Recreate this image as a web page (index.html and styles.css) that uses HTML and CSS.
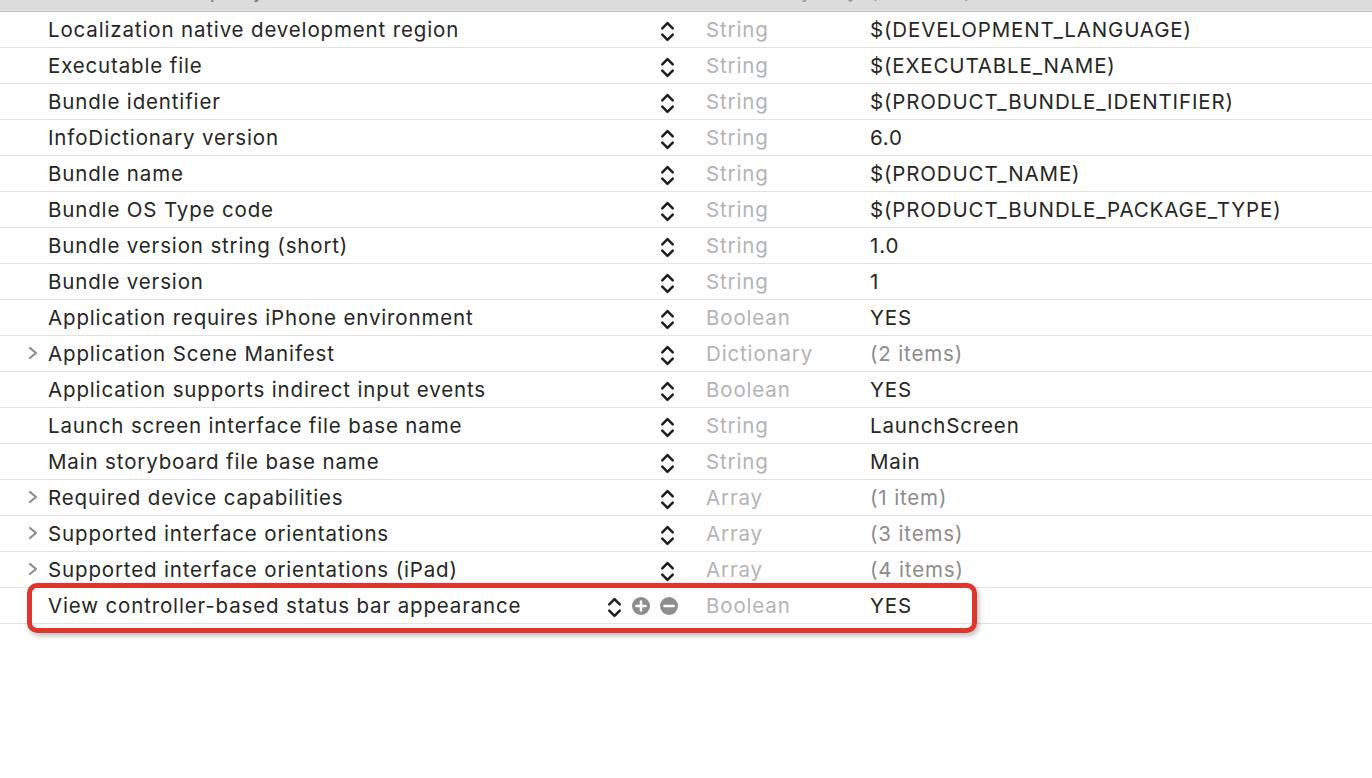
FILE: index.html
```html
<!DOCTYPE html>
<html>
<head>
  <meta name="viewport" content="width=device-width, initial-scale=1.0">
  <link rel="stylesheet" href="styles.css">
</head>
<body>
  <div class="plist">
    <div class="row root">
      <div class="disclosure"></div>
      <div class="key">Information Property List</div>
      <div class="controls">
        <span class="circle-btn"></span>
      </div>
      <div class="type">Dictionary <svg class="stepper small" viewBox="0 0 14 20"><polyline points="2,7 7,2 12,7"/><polyline points="2,13 7,18 12,13"/></svg></div>
      <div class="value muted">(16 items)</div>
    </div>

    <div class="row">
      <div class="disclosure"></div>
      <div class="key">Localization native development region</div>
      <div class="controls"><svg class="stepper" viewBox="0 0 14 20"><polyline points="2,7 7,2 12,7"/><polyline points="2,13 7,18 12,13"/></svg></div>
      <div class="type">String</div>
      <div class="value">$(DEVELOPMENT_LANGUAGE)</div>
    </div>
    <div class="row">
      <div class="disclosure"></div>
      <div class="key">Executable file</div>
      <div class="controls"><svg class="stepper" viewBox="0 0 14 20"><polyline points="2,7 7,2 12,7"/><polyline points="2,13 7,18 12,13"/></svg></div>
      <div class="type">String</div>
      <div class="value">$(EXECUTABLE_NAME)</div>
    </div>
    <div class="row">
      <div class="disclosure"></div>
      <div class="key">Bundle identifier</div>
      <div class="controls"><svg class="stepper" viewBox="0 0 14 20"><polyline points="2,7 7,2 12,7"/><polyline points="2,13 7,18 12,13"/></svg></div>
      <div class="type">String</div>
      <div class="value">$(PRODUCT_BUNDLE_IDENTIFIER)</div>
    </div>
    <div class="row">
      <div class="disclosure"></div>
      <div class="key">InfoDictionary version</div>
      <div class="controls"><svg class="stepper" viewBox="0 0 14 20"><polyline points="2,7 7,2 12,7"/><polyline points="2,13 7,18 12,13"/></svg></div>
      <div class="type">String</div>
      <div class="value">6.0</div>
    </div>
    <div class="row">
      <div class="disclosure"></div>
      <div class="key">Bundle name</div>
      <div class="controls"><svg class="stepper" viewBox="0 0 14 20"><polyline points="2,7 7,2 12,7"/><polyline points="2,13 7,18 12,13"/></svg></div>
      <div class="type">String</div>
      <div class="value">$(PRODUCT_NAME)</div>
    </div>
    <div class="row">
      <div class="disclosure"></div>
      <div class="key">Bundle OS Type code</div>
      <div class="controls"><svg class="stepper" viewBox="0 0 14 20"><polyline points="2,7 7,2 12,7"/><polyline points="2,13 7,18 12,13"/></svg></div>
      <div class="type">String</div>
      <div class="value">$(PRODUCT_BUNDLE_PACKAGE_TYPE)</div>
    </div>
    <div class="row">
      <div class="disclosure"></div>
      <div class="key">Bundle version string (short)</div>
      <div class="controls"><svg class="stepper" viewBox="0 0 14 20"><polyline points="2,7 7,2 12,7"/><polyline points="2,13 7,18 12,13"/></svg></div>
      <div class="type">String</div>
      <div class="value">1.0</div>
    </div>
    <div class="row">
      <div class="disclosure"></div>
      <div class="key">Bundle version</div>
      <div class="controls"><svg class="stepper" viewBox="0 0 14 20"><polyline points="2,7 7,2 12,7"/><polyline points="2,13 7,18 12,13"/></svg></div>
      <div class="type">String</div>
      <div class="value">1</div>
    </div>
    <div class="row">
      <div class="disclosure"></div>
      <div class="key">Application requires iPhone environment</div>
      <div class="controls"><svg class="stepper" viewBox="0 0 14 20"><polyline points="2,7 7,2 12,7"/><polyline points="2,13 7,18 12,13"/></svg></div>
      <div class="type">Boolean</div>
      <div class="value">YES</div>
    </div>
    <div class="row">
      <div class="disclosure"><svg class="chevron" viewBox="0 0 10 12"><polyline points="2,1 8,6 2,11"/></svg></div>
      <div class="key">Application Scene Manifest</div>
      <div class="controls"><svg class="stepper" viewBox="0 0 14 20"><polyline points="2,7 7,2 12,7"/><polyline points="2,13 7,18 12,13"/></svg></div>
      <div class="type">Dictionary</div>
      <div class="value muted">(2 items)</div>
    </div>
    <div class="row">
      <div class="disclosure"></div>
      <div class="key">Application supports indirect input events</div>
      <div class="controls"><svg class="stepper" viewBox="0 0 14 20"><polyline points="2,7 7,2 12,7"/><polyline points="2,13 7,18 12,13"/></svg></div>
      <div class="type">Boolean</div>
      <div class="value">YES</div>
    </div>
    <div class="row">
      <div class="disclosure"></div>
      <div class="key">Launch screen interface file base name</div>
      <div class="controls"><svg class="stepper" viewBox="0 0 14 20"><polyline points="2,7 7,2 12,7"/><polyline points="2,13 7,18 12,13"/></svg></div>
      <div class="type">String</div>
      <div class="value">LaunchScreen</div>
    </div>
    <div class="row">
      <div class="disclosure"></div>
      <div class="key">Main storyboard file base name</div>
      <div class="controls"><svg class="stepper" viewBox="0 0 14 20"><polyline points="2,7 7,2 12,7"/><polyline points="2,13 7,18 12,13"/></svg></div>
      <div class="type">String</div>
      <div class="value">Main</div>
    </div>
    <div class="row">
      <div class="disclosure"><svg class="chevron" viewBox="0 0 10 12"><polyline points="2,1 8,6 2,11"/></svg></div>
      <div class="key">Required device capabilities</div>
      <div class="controls"><svg class="stepper" viewBox="0 0 14 20"><polyline points="2,7 7,2 12,7"/><polyline points="2,13 7,18 12,13"/></svg></div>
      <div class="type">Array</div>
      <div class="value muted">(1 item)</div>
    </div>
    <div class="row">
      <div class="disclosure"><svg class="chevron" viewBox="0 0 10 12"><polyline points="2,1 8,6 2,11"/></svg></div>
      <div class="key">Supported interface orientations</div>
      <div class="controls"><svg class="stepper" viewBox="0 0 14 20"><polyline points="2,7 7,2 12,7"/><polyline points="2,13 7,18 12,13"/></svg></div>
      <div class="type">Array</div>
      <div class="value muted">(3 items)</div>
    </div>
    <div class="row">
      <div class="disclosure"><svg class="chevron" viewBox="0 0 10 12"><polyline points="2,1 8,6 2,11"/></svg></div>
      <div class="key">Supported interface orientations (iPad)</div>
      <div class="controls"><svg class="stepper" viewBox="0 0 14 20"><polyline points="2,7 7,2 12,7"/><polyline points="2,13 7,18 12,13"/></svg></div>
      <div class="type">Array</div>
      <div class="value muted">(4 items)</div>
    </div>
    <div class="row editing">
      <div class="disclosure"></div>
      <div class="key">View controller-based status bar appearance</div>
      <div class="controls">
        <svg class="stepper" viewBox="0 0 14 20"><polyline points="2,7 7,2 12,7"/><polyline points="2,13 7,18 12,13"/></svg>
        <svg class="circle-btn" viewBox="0 0 18 18"><circle cx="9" cy="9" r="9"/><path d="M9 4.5v9M4.5 9h9"/></svg>
        <svg class="circle-btn" viewBox="0 0 18 18"><circle cx="9" cy="9" r="9"/><path d="M4.5 9h9"/></svg>
      </div>
      <div class="type">Boolean</div>
      <div class="value">YES</div>
      <div class="highlight"></div>
    </div>
  </div>
</body>
</html>
```

FILE: styles.css
```css
* {
  margin: 0;
  padding: 0;
  box-sizing: border-box;
}

body {
  background: #fff;
  color: #262626;
  font-family: Inter, 'Liberation Sans', sans-serif;
  font-size: 20.5px;
  letter-spacing: 0.85px;
  overflow: hidden;
  height: 778px;
}

.plist {
  display: flex;
  flex-direction: column;
}

.row {
  position: relative;
  display: grid;
  grid-template-columns: 48px 552px 106px 164px 1fr;
  align-items: center;
  height: 36px;
  padding-bottom: 1px;
  border-bottom: 1px solid #e2e2e2;
  white-space: nowrap;
}

/* only the bottom strip of the root row is visible */
.row.root {
  margin-top: -24px;
  padding-bottom: 7px;
  background: #dcdcdc;
  border-bottom: 1px solid #c4c4c4;
  color: #7d7d7d;
}

.disclosure {
  display: flex;
  justify-content: flex-end;
  padding-right: 10px;
}

.chevron {
  width: 10px;
  height: 12px;
  fill: none;
  stroke: #8a8a8a;
  stroke-width: 2;
  stroke-linecap: round;
  stroke-linejoin: round;
}

.controls {
  display: flex;
  justify-content: flex-end;
  align-items: center;
  gap: 10px;
  padding-right: 31px;
}

.editing .controls {
  padding-right: 28px;
}

.stepper {
  width: 15px;
  height: 21px;
  margin-top: 4px;
  fill: none;
  stroke: #1e1e1e;
  stroke-width: 2.4;
  stroke-linecap: round;
  stroke-linejoin: round;
}

.circle-btn {
  width: 18px;
  height: 18px;
  margin-top: 2px;
}

.circle-btn circle {
  fill: #8e8e8e;
}

.circle-btn path {
  stroke: #fff;
  stroke-width: 2.6;
  stroke-linecap: round;
}

span.circle-btn {
  display: block;
  border-radius: 50%;
  background: #8e8e8e;
  margin-right: -3px;
}

.type {
  color: #b4b4b4;
  display: flex;
  align-items: center;
  gap: 30px;
}

.root .type {
  color: #a0a0a0;
}

.type .stepper.small {
  stroke: #a0a0a0;
}

.value {
  color: #262626;
}

.value.muted {
  color: #8c8c8c;
}

/* red annotation box around the last row */
.highlight {
  position: absolute;
  left: 27px;
  top: -5px;
  width: 950px;
  height: 50px;
  border: 5px solid #e0352b;
  border-radius: 10px;
  box-shadow: 2px 3px 5px rgba(0, 0, 0, 0.25);
  pointer-events: none;
}
```
